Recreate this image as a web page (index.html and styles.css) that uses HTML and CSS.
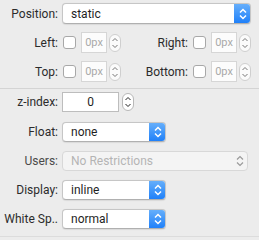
FILE: index.html
```html
<!DOCTYPE html>
<html>
<head>
<meta charset="utf-8">
<link rel="stylesheet" href="styles.css">
</head>
<body>
<div class="panel">
  <div class="row r-position">
    <span class="label">Position:</span>
    <div class="select wide">
      <span class="value">static</span>
      <span class="popbtn"><svg width="16" height="20" viewBox="0 0 16 20"><path d="M5 8.5 L8 5.5 L11 8.5 M5 11.5 L8 14.5 L11 11.5" fill="none" stroke="#fff" stroke-width="1.5"/></svg></span>
    </div>
  </div>

  <div class="row r-offset">
    <span class="label">Left:</span>
    <span class="check"></span>
    <span class="pxbox">0px</span>
    <span class="stepper"><svg width="12" height="18" viewBox="0 0 12 18"><path d="M3.5 7 L6 4.5 L8.5 7 M3.5 11 L6 13.5 L8.5 11" fill="none" stroke="#777" stroke-width="1"/></svg></span>
    <span class="label label2">Right:</span>
    <span class="check"></span>
    <span class="pxbox">0px</span>
    <span class="stepper"><svg width="12" height="18" viewBox="0 0 12 18"><path d="M3.5 7 L6 4.5 L8.5 7 M3.5 11 L6 13.5 L8.5 11" fill="none" stroke="#777" stroke-width="1"/></svg></span>
  </div>

  <div class="row r-offset">
    <span class="label">Top:</span>
    <span class="check"></span>
    <span class="pxbox">0px</span>
    <span class="stepper"><svg width="12" height="18" viewBox="0 0 12 18"><path d="M3.5 7 L6 4.5 L8.5 7 M3.5 11 L6 13.5 L8.5 11" fill="none" stroke="#777" stroke-width="1"/></svg></span>
    <span class="label label2">Bottom:</span>
    <span class="check"></span>
    <span class="pxbox">0px</span>
    <span class="stepper"><svg width="12" height="18" viewBox="0 0 12 18"><path d="M3.5 7 L6 4.5 L8.5 7 M3.5 11 L6 13.5 L8.5 11" fill="none" stroke="#777" stroke-width="1"/></svg></span>
  </div>

  <div class="sep"></div>

  <div class="row r-z">
    <span class="label">z-index:</span>
    <span class="zbox">0</span>
    <span class="stepper"><svg width="12" height="18" viewBox="0 0 12 18"><path d="M3.5 7 L6 4.5 L8.5 7 M3.5 11 L6 13.5 L8.5 11" fill="none" stroke="#222" stroke-width="1"/></svg></span>
  </div>

  <div class="row r-sel">
    <span class="label">Float:</span>
    <div class="select narrow">
      <span class="value">none</span>
      <span class="popbtn"><svg width="16" height="20" viewBox="0 0 16 20"><path d="M5 8.5 L8 5.5 L11 8.5 M5 11.5 L8 14.5 L11 11.5" fill="none" stroke="#fff" stroke-width="1.5"/></svg></span>
    </div>
  </div>

  <div class="row r-sel">
    <span class="label dim">Users:</span>
    <div class="select disabled users">
      <span class="value">No Restrictions</span>
      <span class="popbtn grey"><svg width="16" height="20" viewBox="0 0 16 20"><path d="M5 8.5 L8 5.5 L11 8.5 M5 11.5 L8 14.5 L11 11.5" fill="none" stroke="#9a9a9a" stroke-width="1.2"/></svg></span>
    </div>
  </div>

  <div class="row r-sel">
    <span class="label">Display:</span>
    <div class="select narrow">
      <span class="value">inline</span>
      <span class="popbtn"><svg width="16" height="20" viewBox="0 0 16 20"><path d="M5 8.5 L8 5.5 L11 8.5 M5 11.5 L8 14.5 L11 11.5" fill="none" stroke="#fff" stroke-width="1.5"/></svg></span>
    </div>
  </div>

  <div class="row r-sel">
    <span class="label">White Sp..</span>
    <div class="select narrow">
      <span class="value">normal</span>
      <span class="popbtn"><svg width="16" height="20" viewBox="0 0 16 20"><path d="M5 8.5 L8 5.5 L11 8.5 M5 11.5 L8 14.5 L11 11.5" fill="none" stroke="#fff" stroke-width="1.5"/></svg></span>
    </div>
  </div>
</div>
</body>
</html>
```

FILE: styles.css
```css
html, body {
  margin: 0;
  padding: 0;
  background: #ececec;
}
body {
  width: 259px;
  height: 240px;
  overflow: hidden;
  font-family: "Roboto", "Liberation Sans", sans-serif;
  font-size: 12px;
  color: #2b2b2b;
}
.panel {
  height: 237px;
  border-bottom: 1px solid #dcdcdc;
  padding-top: 3px;
  box-sizing: border-box;
}
.row {
  display: flex;
  align-items: center;
}
.label {
  width: 58px;
  text-align: right;
  flex: none;
  margin-right: 4px;
  white-space: nowrap;
}
.label.dim { color: #4a4a4a; }
.select {
  height: 21px;
  box-sizing: border-box;
  border: 1px solid #c6c6c6;
  border-bottom-color: #b0b0b0;
  border-radius: 4px;
  background: #fff;
  display: flex;
  align-items: center;
  justify-content: space-between;
  overflow: hidden;
  box-shadow: 0 0.5px 1px rgba(0,0,0,0.08);
}
.select .value {
  padding-left: 8px;
  font-size: 12px;
  color: #1f1f1f;
}
.select.wide { width: 189px; }
.select.narrow { width: 104px; }
.popbtn {
  width: 17px;
  height: 21px;
  margin: -1px -1px -1px 0;
  background: linear-gradient(#69b1fb, #1c7ef9);
  border-radius: 0 4px 4px 0;
  display: flex;
  align-items: center;
  justify-content: center;
}
.popbtn svg { display: block; }
.popbtn.grey { background: none; }
.select.disabled {
  background: #f4f4f4;
  border-color: #d8d8d8;
  box-shadow: none;
}
.select.disabled .value { color: #b4b4b4; }
.select.users { width: 186px; }

.r-position { height: 21px; }
.r-offset { height: 21px; margin-top: 8px; }
.r-offset + .r-offset { margin-top: 8px; }
.check {
  width: 13px;
  height: 13px;
  box-sizing: border-box;
  border: 1px solid #a8a8a8;
  border-radius: 3px;
  background: #fff;
  margin-left: 1px;
  flex: none;
}
.pxbox {
  width: 26px;
  height: 21px;
  box-sizing: border-box;
  border: 1px solid #d6d6d6;
  background: #fcfcfc;
  color: #a9a9a9;
  font-size: 11px;
  display: flex;
  align-items: center;
  justify-content: center;
  margin-left: 5px;
  flex: none;
}
.stepper {
  width: 12px;
  height: 18px;
  box-sizing: border-box;
  border: 1px solid #cfcfcf;
  border-radius: 6px;
  background: #fbfbfb;
  margin-left: 2px;
  display: flex;
  align-items: center;
  justify-content: center;
  flex: none;
}
.stepper svg { display: block; margin: -1px; }
.label2 { width: 67px; }
.sep {
  height: 1px;
  background: #d4d4d4;
  margin-top: 6px;
}
.r-z { margin-top: 3px; height: 20px; }
.zbox {
  width: 57px;
  height: 20px;
  box-sizing: border-box;
  border: 1px solid #bdbdbd;
  background: #fff;
  display: flex;
  align-items: center;
  justify-content: center;
  color: #1f1f1f;
  flex: none;
}
.r-z .stepper { border-color: #b8b8b8; background: #fff; margin-left: 3px; }
.r-sel { margin-top: 9px; height: 20px; }
.r-sel .select { height: 20px; }
.r-sel .popbtn { height: 20px; }
.r-z + .r-sel { margin-top: 10px; }
```
